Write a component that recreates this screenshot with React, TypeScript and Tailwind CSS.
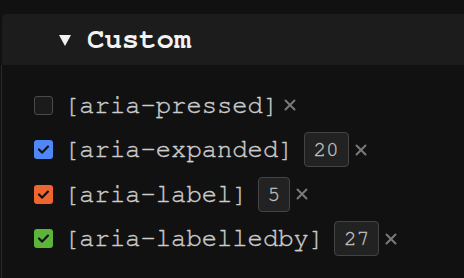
import React from "react";

type Attr = {
  name: string;
  checked: boolean;
  color: string;
  count?: number;
};

const attrs: Attr[] = [
  { name: "[aria-pressed]", checked: false, color: "" },
  { name: "[aria-expanded]", checked: true, color: "bg-[#4f87f6]", count: 20 },
  { name: "[aria-label]", checked: true, color: "bg-[#ee6530]", count: 5 },
  { name: "[aria-labelledby]", checked: true, color: "bg-[#5db43b]", count: 27 },
];

const mono = { fontFamily: '"Nimbus Mono PS", "FreeMono", "Courier New", "Liberation Mono", monospace' };

function Check({ on, color }: { on: boolean; color: string }) {
  if (!on) {
    return <span className="h-[19px] w-[19px] shrink-0 rounded-[3px] border-[1.5px] border-[#4a4a4a] bg-[#1b1b1b]" />;
  }
  return (
    <span className={`flex h-[19px] w-[19px] shrink-0 items-center justify-center rounded-[3px] ${color}`}>
      <svg width="13" height="13" viewBox="0 0 13 13" fill="none">
        <path d="M2 6.5 L5.2 9.6 L11 3.6" stroke="#111" strokeWidth="2.2" strokeLinecap="round" strokeLinejoin="round" />
      </svg>
    </span>
  );
}

function Remove() {
  return (
    <svg className="ml-[6px] shrink-0" width="12" height="12" viewBox="0 0 12 12">
      <path d="M1.5 1.5 L10.5 10.5 M10.5 1.5 L1.5 10.5" stroke="#7a7a7a" strokeWidth="2" strokeLinecap="round" />
    </svg>
  );
}

export default function App() {
  return (
    <div className="h-[278px] w-[464px] overflow-hidden bg-[#111111] pt-[14px]">
      <div className="ml-[2px] flex h-[51px] items-center rounded-tl-[5px] bg-[#1c1c1c] pl-[57px]">
        <svg width="12" height="12" viewBox="0 0 12 12">
          <polygon points="0,1 12,1 6,12" fill="#f2f2f2" />
        </svg>
        <span style={mono} className="ml-[16px] text-[29px] font-bold leading-none text-[#f2f2f2]">
          Custom
        </span>
      </div>
      <div className="ml-px flex h-[213px] flex-col border-l border-[#2a2a2a] pt-[18px]">
        {attrs.map((a) => (
          <div key={a.name} className="flex h-[44.5px] items-center pl-[32px]">
            <Check on={a.checked} color={a.color} />
            <span
              style={mono}
              className="ml-[11px] text-[25.5px] leading-none text-[#cccccc] [-webkit-text-stroke:0.4px_#cccccc]"
            >
              {a.name}
            </span>
            {a.count !== undefined && (
              <span
                style={mono}
                className="ml-[10px] flex h-[35px] items-center rounded-[4px] border border-[#444] bg-[#222] px-[9px] text-[21px] leading-none text-[#c4c4c4] [-webkit-text-stroke:0.3px_#c4c4c4]"
              >
                {a.count}
              </span>
            )}
            <Remove />
          </div>
        ))}
      </div>
    </div>
  );
}
